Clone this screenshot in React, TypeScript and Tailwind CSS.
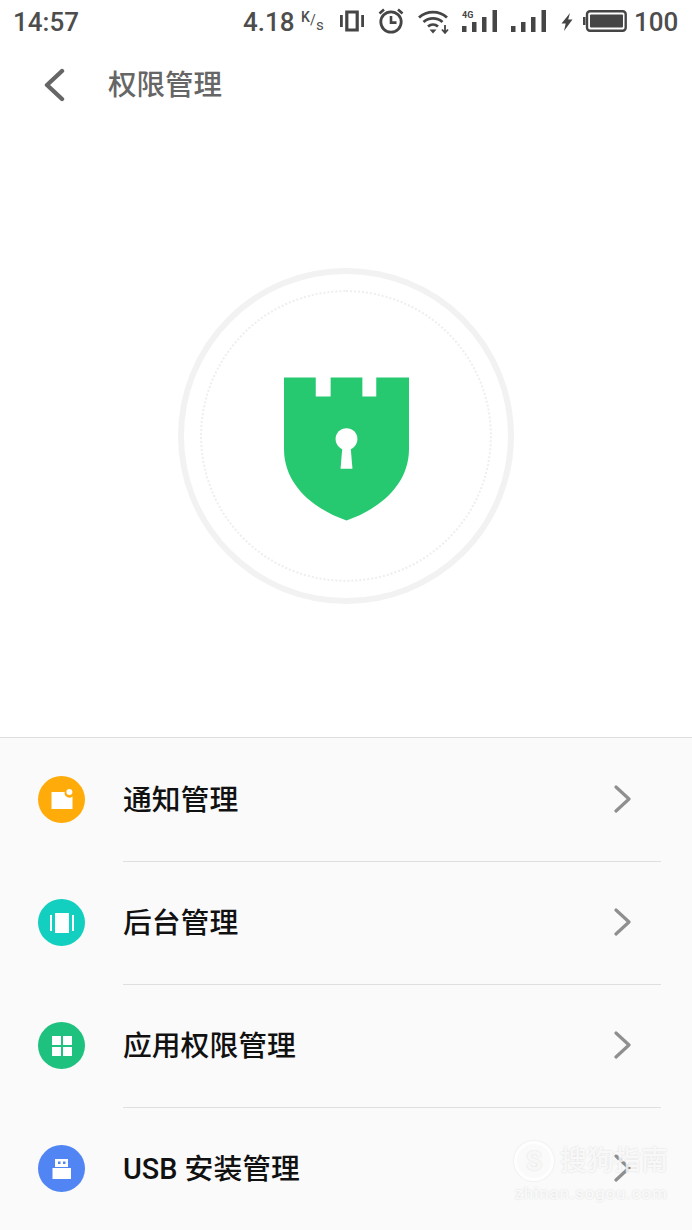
import type { ReactNode } from "react";

const Vibrate = () => (
    <svg width="24" height="22" viewBox="0 0 24 22" className="ml-[16px] mb-[2px]">
        <path d="M6.8 2h10.4v18H6.8z" fill="none" stroke="#454545" strokeWidth="3.2" />
        <path d="M1.4 5v12M22.6 5v12" stroke="#454545" strokeWidth="2.8" />
    </svg>
);

const Alarm = () => (
    <svg width="26" height="26" viewBox="0 0 26 26" className="ml-[14px] mb-[2px]">
        <circle cx="13" cy="14" r="10.2" fill="none" stroke="#454545" strokeWidth="2.8" />
        <path d="M13 8v6.6h5.5" fill="none" stroke="#454545" strokeWidth="2.6" />
        <path d="M1.5 5.5 6 1.5M24.5 5.5 20 1.5" stroke="#454545" strokeWidth="2.6" />
    </svg>
);

const Wifi = () => (
    <svg width="32" height="25" viewBox="0 0 32 25" className="ml-[14px] mb-[2px]">
        <path d="M1 8.5C9 1.2 21 1.2 29 8.5M5.5 13C11 8.2 19 8.2 24.5 13M10 17.5c3-2.6 7-2.6 10 0" fill="none" stroke="#454545" strokeWidth="2.8" />
        <path d="M11.5 20.5h7L15 24.5z" fill="#454545" />
        <path d="M27 16v7M24 20.5l3 3.4 3-3.4" fill="none" stroke="#454545" strokeWidth="1.8" />
    </svg>
);

const Signal = ({ tag }: { tag?: boolean }) => (
    <svg width="35" height="22" viewBox="0 0 35 22" className={tag ? "ml-[12px] mb-[2px]" : "ml-[14px] mb-[2px]"}>
        <rect x="0" y="16" width="4.5" height="6" fill="#454545" />
        <rect x="10" y="12" width="4.5" height="10" fill="#454545" />
        <rect x="20" y="7" width="4.5" height="15" fill="#454545" />
        <rect x="30.5" y="0" width="4.5" height="22" fill="#454545" />
        {tag && <text x="0" y="8" fontSize="9" fontWeight="700" fill="#454545" fontFamily="Roboto, sans-serif">4G</text>}
    </svg>
);

const Bolt = () => (
    <svg width="12" height="18" viewBox="0 0 12 18" className="ml-[15px]">
        <path d="M9 0 0.5 10.5h4.2L3 18l8.5-11.500H7.200z" fill="#454545" />
    </svg>
);

const Battery = () => (
    <svg width="44" height="22" viewBox="0 0 44 22" className="ml-[10px] mb-[2px]">
        <rect x="0" y="7" width="2.5" height="8" fill="#454545" />
        <rect x="4" y="1.3" width="38.7" height="19.4" rx="3" fill="none" stroke="#454545" strokeWidth="2.4" />
        <rect x="7" y="4.5" width="33" height="13" rx="1" fill="#454545" />
    </svg>
);

const BackArrow = () => (
    <svg width="22" height="34" viewBox="0 0 22 34" className="ml-[43px]">
        <path d="M19 3 4 17l15 14" fill="none" stroke="#666666" strokeWidth="4.4" strokeLinecap="round" strokeLinejoin="round" />
    </svg>
);

const RowArrow = () => (
    <svg width="18" height="28" viewBox="0 0 18 28" className="mr-[29px] mb-[3px]">
        <path d="M2 2l13 12L2 26" fill="none" stroke="#8f8f8f" strokeWidth="3.2" strokeLinecap="round" strokeLinejoin="round" />
    </svg>
);

const Shield = () => (
    <svg width="125" height="144" viewBox="0 0 126 144">
        <path d="M0 0h32v19h15V0h32v19h14V0h33v72c0 35-28 60-63 72C28 132 0 107 0 72z" fill="#26c96f" />
        <circle cx="63" cy="62" r="11" fill="#fff" />
        <path d="M59 68h8l2 24H57z" fill="#fff" />
    </svg>
);

const NotifyIcon = () => (
    <svg width="22" height="22" viewBox="0 0 22 22">
        <path d="M0.5 3h13.2a4.8 4.8 0 0 0 7.8 4.6V20H0.5z" fill="#fff" />
        <circle cx="18.4" cy="3" r="3" fill="#fff" />
    </svg>
);

const BackgroundIcon = () => (
    <svg width="24" height="20" viewBox="0 0 24 20">
        <rect x="5" y="0" width="14" height="20" fill="#fff" />
        <rect x="0" y="2" width="2" height="16" fill="#fff" />
        <rect x="22" y="2" width="2" height="16" fill="#fff" />
    </svg>
);

const GridIcon = () => (
    <svg width="20" height="20" viewBox="0 0 20 20">
        <rect x="0" y="0" width="9" height="9" fill="#fff" />
        <rect x="11" y="0" width="9" height="9" fill="#fff" />
        <rect x="0" y="11" width="9" height="9" fill="#fff" />
        <rect x="11" y="11" width="9" height="9" fill="#fff" />
    </svg>
);

const UsbIcon = () => (
    <svg width="20" height="20" viewBox="0 0 20 20">
        <path d="M3 0h13v8H3z" fill="#fff" />
        <rect x="6" y="2.5" width="2.5" height="2.5" fill="#5085f3" />
        <rect x="11" y="2.5" width="2.5" height="2.5" fill="#5085f3" />
        <rect x="0.5" y="9" width="18.5" height="11" fill="#fff" />
    </svg>
);

interface IRow {
    label: string;
    color: string;
    icon: ReactNode;
}

const rows: IRow[] = [
    { label: "通知管理", color: "bg-[#ffab0a]", icon: <NotifyIcon /> },
    { label: "后台管理", color: "bg-[#13cfc0]", icon: <BackgroundIcon /> },
    { label: "应用权限管理", color: "bg-[#1fc17f]", icon: <GridIcon /> },
    { label: "USB 安装管理", color: "bg-[#5085f3]", icon: <UsbIcon /> },
];

const App = () => {
    return (
        <div className="relative w-[692px] h-[1230px] overflow-hidden bg-white font-['Roboto','Noto_Sans_CJK_SC',sans-serif]">
            <div className="flex items-center h-[44px] pl-[13px] text-[#4d4d4d] text-[26px]">
                <span className="font-medium w-[230px]">14:57</span>
                <span className="w-[52px] font-medium">4.18</span>
                <span className="relative ml-[6px] w-[23px] h-[24px] text-[14px] leading-none">
                    <span className="absolute left-0 top-0 font-medium">K</span>
                    <span className="absolute left-[9px] top-[3px]">/</span>
                    <span className="absolute left-[15px] top-[8px] text-[15px]">s</span>
                </span>
                <Vibrate />
                <Alarm />
                <Wifi />
                <Signal tag />
                <Signal />
                <Bolt />
                <Battery />
                <span className="ml-[7px] font-medium">100</span>
            </div>

            <div className="flex items-center h-[82px]">
                <BackArrow />
                <span className="ml-[43px] pt-[3px] text-[28.5px] font-medium text-[#666666]">权限管理</span>
            </div>

            <div className="flex items-center justify-center h-[611px] pt-[9px]">
                <div className="flex items-center justify-center w-[336px] h-[336px] rounded-full border-[6px] border-[#f2f2f2]">
                    <div className="flex items-center justify-center w-[292px] h-[292px] pt-[26px] rounded-full border-2 border-dotted border-[#eeeeee]">
                        <Shield />
                    </div>
                </div>
            </div>

            <div className="h-[493px] pt-[1px] bg-[#fafafa] border-t border-[#dedede]">
                {rows.map((row, i) => (
                    <div key={row.label} className="flex items-stretch h-[123px] pl-[38px] pr-[31px]">
                        <div className="flex items-center pb-[2px]">
                            <div className={`flex items-center justify-center w-[47px] h-[47px] rounded-full ${row.color}`}>
                                {row.icon}
                            </div>
                        </div>
                        <div className={`flex flex-1 items-center justify-between ml-[38px] ${i < rows.length - 1 ? "border-b border-[#dfdfdf]" : ""}`}>
                            <span className="text-[28.8px] pt-[1px] font-medium text-[#111111]">{row.label}</span>
                            <RowArrow />
                        </div>
                    </div>
                ))}
            </div>

            <div className="absolute left-[514px] top-[1141px] flex flex-col items-center text-white/80 [text-shadow:0_0_2px_rgba(0,0,0,0.15)]">
                <div className="flex items-center">
                    <div className="flex items-center justify-center w-[40px] h-[40px] rounded-full border-[3px] border-white/80 text-[26px] font-bold leading-none shadow-[0_0_2px_rgba(0,0,0,0.12)]">S</div>
                    <span className="ml-[6px] text-[27px] font-medium leading-none">搜狗指南</span>
                </div>
                <span className="mt-[4px] text-[17px] tracking-[0.8px] leading-none font-medium">zhinan.sogou.com</span>
            </div>
        </div>
    );
};

export default App;
